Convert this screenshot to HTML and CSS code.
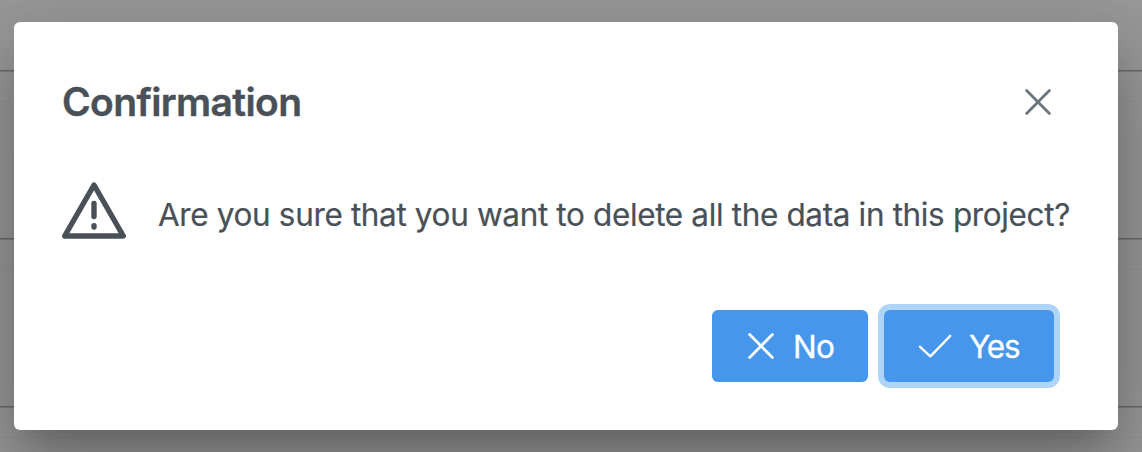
FILE: index.html
```
<!DOCTYPE html>
<html lang="en">
<head>
<meta charset="utf-8">
<title>Confirmation</title>
<link rel="stylesheet" href="styles.css">
</head>
<body>
<main class="mask">
  <section class="dialog" role="dialog" aria-labelledby="title">
    <header class="dialog-header">
      <h1 class="dialog-title" id="title">Confirmation</h1>
      <button class="close" aria-label="Close">
        <svg width="28" height="28" viewBox="0 0 28 28"><path d="M2.6 2.6L25.4 25.4M25.4 2.6L2.6 25.4"/></svg>
      </button>
    </header>
    <div class="dialog-content">
      <svg class="warning" width="64" height="64" viewBox="0 0 64 64">
        <path d="M32 7L61.300 58H2.700Z"/>
        <path d="M32 25.500V38.500M32 47.700V49.000"/>
      </svg>
      <p class="message">Are you sure that you want to delete all the data in this project?</p>
    </div>
    <footer class="dialog-footer">
      <button class="button button-no">
        <svg width="28" height="28" viewBox="0 0 28 28"><path d="M2.600 2.600L25.400 25.400M25.400 2.600L2.600 25.400"/></svg>
        <span>No</span>
      </button>
      <button class="button button-yes">
        <svg width="34" height="24" viewBox="0 0 34 24"><path d="M1.800 12.700L12.400 22.300L32.200 1.800"/></svg>
        <span>Yes</span>
      </button>
    </footer>
  </section>
</main>
</body>
</html>
```
FILE: styles.css
```
* {
  box-sizing: border-box;
}

body {
  margin: 0;
  font-family: Inter, "Liberation Sans", sans-serif;
  color: #495057;
}

/* Dimmed table rows behind the dialog repeat every 168px */
.mask {
  height: 452px;
  padding: 22px 24px 22px 14px;
  overflow: hidden;
  background: repeating-linear-gradient(#999 0 2px, #6b6b6b 2px 3px, #808080 3px 4px, #999 4px 33px, #949494 33px 34px, #999 34px 168px) 0 68px / 100% 384px no-repeat #999;
}

.dialog {
  display: flex;
  flex-direction: column;
  height: 408px;
  border-radius: 6px;
  background: #fff;
  box-shadow: 0 22px 30px -14px rgba(0, 0, 0, 0.2), 0 48px 76px 6px rgba(0, 0, 0, 0.14), 0 18px 92px 16px rgba(0, 0, 0, 0.12);
}

.dialog-header {
  display: flex;
  align-items: center;
  justify-content: space-between;
  height: 160px;
  padding: 0 48px;
}

.dialog-title {
  margin: 0;
  font-size: 39px;
  font-weight: 600;
  letter-spacing: -0.62px;
  -webkit-text-stroke: 0.4px currentColor;
  line-height: 60px;
}

.close {
  display: grid;
  place-items: center;
  width: 64px;
  height: 64px;
  padding: 0;
  border: 0;
  background: none;
}

svg {
  flex: none;
  fill: none;
  stroke: currentColor;
  stroke-width: 2.8;
  stroke-linecap: round;
  stroke-linejoin: round;
}

.close svg {
  color: #6c757d;
}

.dialog-content {
  display: flex;
  align-items: center;
  height: 64px;
  padding: 0 48px;
  gap: 32px;
}

.warning {
  margin-top: -8px;
  stroke-width: 5.4;
}

.message {
  margin: 2px 0 0;
  font-size: 31.5px;
  letter-spacing: -0.36px;
  -webkit-text-stroke: 0.2px currentColor;
  line-height: 48px;
  white-space: nowrap;
}

.dialog-footer {
  display: flex;
  justify-content: flex-end;
  gap: 16px;
  padding: 64px 64px 48px;
}

.button {
  display: flex;
  align-items: center;
  height: 72px;
  padding: 0 34px 0 35px;
  border: 0;
  border-radius: 6px;
  background: #4696ec;
  color: #fff;
  font: 31.5px Inter, "Liberation Sans", sans-serif;
  letter-spacing: -0.7px;
  -webkit-text-stroke: 0.3px currentColor;
  white-space: nowrap;
}

.button-no {
  width: 156px;
  gap: 18px;
}

.button-yes {
  width: 170px;
  padding-left: 34px;
  gap: 17px;
  letter-spacing: -1.2px;
  box-shadow: 0 0 0 6px #aed5f7;
}

.button-yes svg {
  stroke-width: 2.4;
}
```
